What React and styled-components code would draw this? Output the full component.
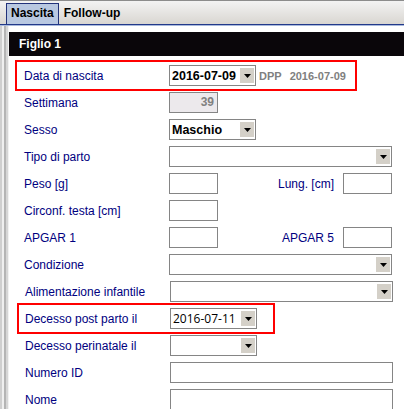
import styled, { createGlobalStyle } from "styled-components";

const GlobalStyle = createGlobalStyle`
  html, body {
    margin: 0;
    padding: 0;
    background: #fff;
  }
  body {
    font-family: "Liberation Sans", Arial, sans-serif;
  }
`;

const Window = styled.div`
  width: 404px;
  height: 409px;
  overflow: hidden;
  display: flex;
  flex-direction: column;
  background: #fff;
`;

// barra delle schede in alto
const TabBar = styled.div`
  height: 25px;
  box-sizing: border-box;
  flex-shrink: 0;
  display: flex;
  align-items: flex-end;
  padding-left: 6px;
  border-top: 1px solid #8c8c8c;
  border-bottom: 1px solid #22398a;
  box-shadow: 0 1px 0 #a9b9dc;
  background: linear-gradient(#f3f3f3, #d9d6d1);
  position: relative;
  z-index: 1;
`;

const Tab = styled.div`
  height: 21px;
  box-sizing: border-box;
  padding: 0 4px;
  line-height: 19px;
  font-size: 12px;
  font-weight: bold;
  color: #000;
  border: 1px solid ${(p) => (p.$active ? "#22327a" : "transparent")};
  border-bottom: none;
  background: ${(p) => (p.$active ? "#b9c8e1" : "transparent")};
`;

const Body = styled.div`
  flex: 1;
  display: flex;
  min-height: 0;
`;

const SideStrip = styled.div`
  width: 9px;
  flex-shrink: 0;
  background: linear-gradient(
    to right,
    #cfcfcf 0 2px,
    #efefef 2px 4px,
    #b4b4b4 4px 6px,
    #d6d6d6 6px 8px,
    #f2f2f2 8px 9px
  );
`;

const Content = styled.div`
  flex: 1;
  padding-top: 7px;
  overflow: hidden;
`;

const Header = styled.div`
  height: 24px;
  line-height: 24px;
  padding-left: 10px;
  background: #0a060a;
  color: #fff;
  font-size: 12px;
  font-weight: bold;
`;

const Form = styled.div`
  display: flex;
  flex-direction: column;
  padding-top: 6px;
`;

const Row = styled.div`
  height: 27px;
  display: flex;
  align-items: center;
  padding-left: ${(p) => p.$inset ?? 15}px;
  flex-shrink: 0;
`;

// riga evidenziata con il riquadro rosso
const MarkedRow = styled(Row)`
  box-sizing: border-box;
  height: 31px;
  width: ${(p) => p.$width}px;
  margin: -2px 0 -2px ${(p) => p.$left}px;
  padding-left: ${(p) => p.$pad}px;
  border: 2px solid #ff0000;
`;

const Label = styled.div`
  width: 145px;
  flex-shrink: 0;
  font-size: 12px;
  color: #000080;
  white-space: nowrap;
`;

const Controls = styled.div`
  width: 223px;
  display: flex;
  align-items: center;
`;

const TextBox = styled.div`
  width: ${(p) => p.$w}px;
  height: 21px;
  box-sizing: border-box;
  flex-shrink: 0;
  border: 1px solid #858585;
  background: ${(p) => (p.$disabled ? "#ece9ec" : "#fff")};
  color: #808080;
  font-size: 12px;
  font-weight: bold;
  line-height: 19px;
  text-align: right;
  padding-right: 3px;
`;

const SideLabel = styled.div`
  margin-left: auto;
  margin-right: 9px;
  font-size: 12px;
  color: #000080;
  white-space: nowrap;
`;

const Combo = styled.div`
  width: ${(p) => p.$w}px;
  height: 21px;
  box-sizing: border-box;
  flex-shrink: 0;
  display: flex;
  align-items: center;
  border: 1px solid #858585;
  background: #fff;
  padding: 0 1px 0 2px;
`;

const ComboText = styled.div`
  flex: 1;
  font-size: ${(p) => (p.$plain ? "12px" : "12.5px")};
  font-family: ${(p) =>
    p.$plain ? '"Open Sans", "Noto Sans", sans-serif' : "inherit"};
  font-weight: ${(p) => (p.$plain ? "normal" : "bold")};
  color: #000;
  white-space: nowrap;
  overflow: hidden;
`;

const ComboButton = styled.div`
  width: 14px;
  height: 15px;
  flex-shrink: 0;
  background: #d4d0c8;
  display: flex;
  align-items: center;
  justify-content: center;
`;

const Dpp = styled.span`
  margin-left: ${(p) => p.$gap}px;
  font-size: 11px;
  font-weight: bold;
  color: #808080;
  white-space: nowrap;
`;

function Arrow() {
  return (
    <svg width="7" height="4" viewBox="0 0 7 4">
      <polygon points="0,0 7,0 3.5,4" fill="#000" />
    </svg>
  );
}

function Select({ w, value, plain }) {
  return (
    <Combo $w={w}>
      <ComboText $plain={plain}>{value}</ComboText>
      <ComboButton>
        <Arrow />
      </ComboButton>
    </Combo>
  );
}

export default function App() {
  return (
    <>
      <GlobalStyle />
      <Window>
        <TabBar>
          <Tab $active>Nascita</Tab>
          <Tab>Follow-up</Tab>
        </TabBar>
        <Body>
          <SideStrip />
          <Content>
            <Header>Figlio 1</Header>
            <Form>
              <MarkedRow $left={6} $pad={7} $width={342}>
                <Label>Data di nascita</Label>
                <Select w={87} value="2016-07-09" />
                <Dpp $gap={3}>DPP</Dpp>
                <Dpp $gap={8}>2016-07-09</Dpp>
              </MarkedRow>
              <Row>
                <Label>Settimana</Label>
                <TextBox $w={49} $disabled>
                  39
                </TextBox>
              </Row>
              <Row>
                <Label>Sesso</Label>
                <Select w={87} value="Maschio" />
              </Row>
              <Row>
                <Label>Tipo di parto</Label>
                <Select w={223} />
              </Row>
              <Row>
                <Label>Peso [g]</Label>
                <Controls>
                  <TextBox $w={49} />
                  <SideLabel>Lung. [cm]</SideLabel>
                  <TextBox $w={49} />
                </Controls>
              </Row>
              <Row>
                <Label>Circonf. testa [cm]</Label>
                <TextBox $w={49} />
              </Row>
              <Row>
                <Label>APGAR 1</Label>
                <Controls>
                  <TextBox $w={49} />
                  <SideLabel>APGAR 5</SideLabel>
                  <TextBox $w={49} />
                </Controls>
              </Row>
              <Row>
                <Label>Condizione</Label>
                <Select w={223} />
              </Row>
              <Row $inset={16}>
                <Label>Alimentazione infantile</Label>
                <Select w={223} />
              </Row>
              <MarkedRow $left={8} $pad={6} $width={258}>
                <Label>Decesso post parto il</Label>
                <Select w={87} value="2016-07-11" plain />
              </MarkedRow>
              <Row $inset={16}>
                <Label>Decesso perinatale il</Label>
                <Select w={87} />
              </Row>
              <Row $inset={16}>
                <Label>Numero ID</Label>
                <TextBox $w={223} />
              </Row>
              <Row $inset={16}>
                <Label>Nome</Label>
                <TextBox $w={223} />
              </Row>
            </Form>
          </Content>
        </Body>
      </Window>
    </>
  );
}
